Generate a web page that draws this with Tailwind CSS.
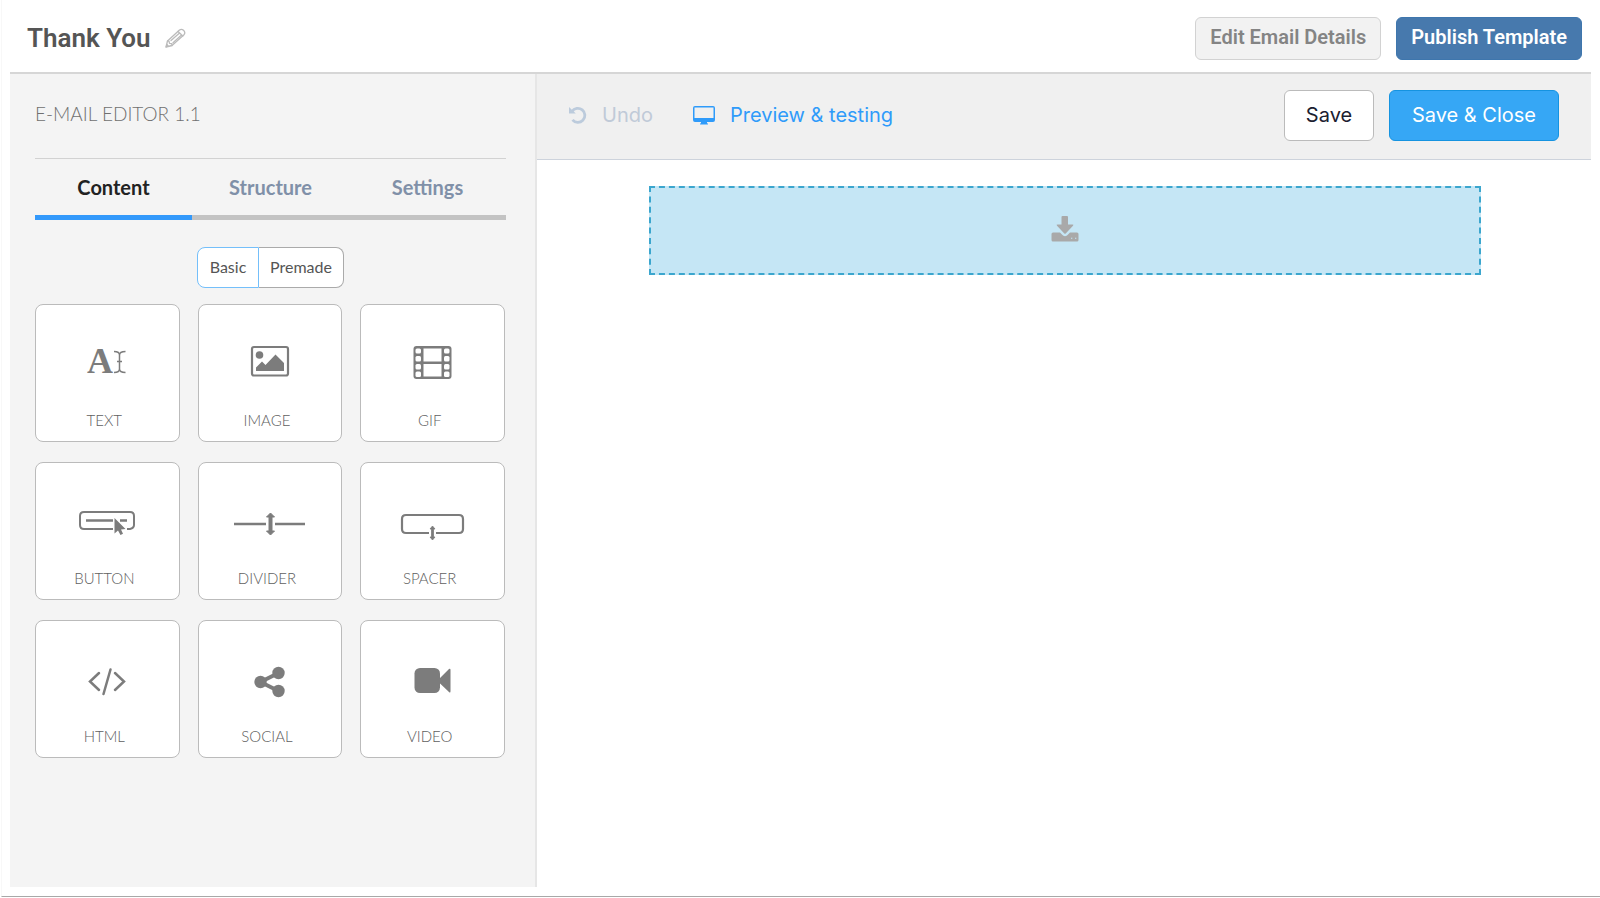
<!doctype html>
<html lang="en">

<head>
    <meta charset="UTF-8">
    <meta name="viewport" content="width=device-width, initial-scale=1.0">
    <title>Thank You - E-mail Editor</title>
    <script src="https://cdn.jsdelivr.net/npm/@tailwindcss/browser@4"></script>
</head>

<body class="min-h-screen bg-white flex flex-col font-['Lato',sans-serif]">
    <div class="grow flex flex-col mb-px ml-px pl-2 pr-[9px] pb-[9px] border-l border-l-[#f8f8f8] border-b border-b-[#a8a8a8]">
        <header class="h-[74px] pt-1 border-b-2 border-[#d6d6d6] flex items-center justify-between pl-[17px] pr-[9px] font-['Roboto',sans-serif]">
            <div class="flex items-center gap-[14px]">
                <h1 class="text-[26px] font-semibold text-[#555] leading-8">Thank You</h1>
                <button aria-label="Rename">
                    <svg class="w-[21px] h-5" viewBox="0 0 21 20" fill="none" stroke="#bbb" stroke-width="1.3" stroke-linejoin="round" stroke-linecap="round">
                        <path d="M1 19 L2.5 13 L14.5 2 Q16.5 .5 18.5 2.3 Q20.8 4.500 19 6.700 L7 17.500 Z" />
                        <path d="M2.500 13 L4 13.200 L4.500 15.300 L6.700 15.700 L7 17.500 M13 3.500 L17.800 8 M6 12.500 L14 5.500 M8 14.700 L16 7.500 M1.200 18.800 L2 16.500 L3.500 18.300" />
                    </svg>
                </button>
            </div>
            <div class="flex gap-[15px] text-xl font-semibold leading-6">
                <button class="h-[43px] px-[14px] pb-[3px] rounded-md border border-[#d2d2d2] bg-[#f2f2f2] text-[#848484]">Edit Email Details</button>
                <button class="h-[43px] px-[14px] pb-[3px] rounded-md border border-[#3e76ad] bg-[#4779ad] text-white">Publish Template</button>
            </div>
        </header>

        <div class="grow flex">
            <aside class="w-[527px] shrink-0 bg-[#f4f4f4] border-r-2 border-[#e6e6e6] pl-[25px] pr-[29px]">
                <h2 class="h-[85px] pt-7 border-b border-[#d2d2d2] text-[19px] leading-6 font-light text-[#707070]">E-MAIL EDITOR 1.1</h2>
                <div role="tablist" class="grid grid-cols-3 text-xl font-bold text-[#8090a8]">
                    <button role="tab" aria-selected="true" class="h-[61px] border-b-[5px] border-[#3399fb] text-[#222]">Content</button>
                    <button role="tab" class="h-[61px] border-b-[5px] border-[#c3c3c3]">Structure</button>
                    <button role="tab" class="h-[61px] border-b-[5px] border-[#c3c3c3]">Settings</button>
                </div>

                <div class="flex justify-center mt-[27px] h-[41px] text-base text-[#555]">
                    <button class="w-[62px] pb-[2px] bg-white border border-[#74bffa] rounded-l-lg">Basic</button>
                    <button class="w-[85px] pb-[2px] bg-white border border-l-0 border-[#aaa] rounded-r-lg">Premade</button>
                </div>

                <!-- content blocks -->
                <div class="grid grid-cols-3 gap-x-[18px] gap-y-5 mt-4 pr-px text-[15px] leading-5 font-light text-[#606060]">
                    <button class="h-[138px] bg-white border border-[#bbb] rounded-lg flex flex-col items-center pt-[35px]">
                        <svg class="w-20 h-12" viewBox="0 0 80 48" fill="none" stroke="#7c7c7c" stroke-width="1.5">
                            <text x="20" y="33" font-family="Liberation Serif, serif" font-weight="700" font-size="36" fill="#7c7c7c" stroke="none">A</text>
                            <path d="M47 11.500 Q52.500 11.500 52.500 15 V29 Q52.500 32.500 47 32.500 M58.500 11.500 Q52.500 11.500 52.500 15 M52.500 29 Q52.500 32.500 58.500 32.500 M50 21.500 H55" />
                        </svg>
                        <span class="mt-[22px] pr-[6px]">TEXT</span>
                    </button>
                    <button class="h-[138px] bg-white border border-[#bbb] rounded-lg flex flex-col items-center pt-[35px]">
                        <svg class="w-20 h-12" viewBox="0 0 80 48" fill="#7c7c7c">
                            <rect x="22" y="7" width="36" height="28.500" rx="2" fill="none" stroke="#7c7c7c" stroke-width="2.200" />
                            <circle cx="29.500" cy="15" r="3.800" />
                            <path d="M26 31 V27.500 L32 21.500 L35.500 25 L45.500 14.500 L54 23 V31 Z" />
                        </svg>
                        <span class="mt-[22px] pr-[6px]">IMAGE</span>
                    </button>
                    <button class="h-[138px] bg-white border border-[#bbb] rounded-lg flex flex-col items-center pt-[35px]">
                        <svg class="w-20 h-12" viewBox="0 0 80 48">
                            <rect x="20.500" y="6" width="38" height="33" rx="3" fill="#7c7c7c" />
                            <g fill="#fff">
                                <rect x="30.500" y="8.500" width="18" height="13" />
                                <rect x="30.500" y="24" width="18" height="12.500" />
                                <rect x="22.500" y="8.500" width="5.500" height="5" rx="1.500" />
                                <rect x="22.500" y="16" width="5.500" height="5.500" rx="1.500" />
                                <rect x="22.500" y="24" width="5.500" height="5.500" rx="1.500" />
                                <rect x="22.500" y="31.500" width="5.500" height="5.500" rx="1.500" />
                                <rect x="51" y="8.500" width="5.500" height="5" rx="1.500" />
                                <rect x="51" y="16" width="5.500" height="5.500" rx="1.500" />
                                <rect x="51" y="24" width="5.500" height="5.500" rx="1.500" />
                                <rect x="51" y="31.500" width="5.500" height="5.500" rx="1.500" />
                            </g>
                        </svg>
                        <span class="mt-[22px] pr-[6px]">GIF</span>
                    </button>
                    <button class="h-[138px] bg-white border border-[#bbb] rounded-lg flex flex-col items-center pt-[35px]">
                        <svg class="w-20 h-12" viewBox="0 0 80 48" fill="none" stroke="#7c7c7c" stroke-width="2">
                            <path d="M46 31 H17 Q13 31 13 27 V18 Q13 14 17 14 H63 Q67 14 67 18 V27 Q67 30 63 31 H60" />
                            <path d="M19 22.500 H46 M53 22.500 H60" stroke-width="2.400" />
                            <path d="M47.500 20 V35.500 L51 32.500 L53.500 37 L56 35.800 L54 31.500 L58.500 31 Z" fill="#7c7c7c" stroke="none" />
                        </svg>
                        <span class="mt-[22px] pr-[6px]">BUTTON</span>
                    </button>
                    <button class="h-[138px] bg-white border border-[#bbb] rounded-lg flex flex-col items-center pt-[35px]">
                        <svg class="w-20 h-12" viewBox="0 0 80 48" fill="none" stroke="#7c7c7c" stroke-width="2.400">
                            <path d="M4 26 H36 M45 26 H75" />
                            <path d="M40.500 15 L44.500 19 H42 V33 H44.500 L40.500 37 L36.500 33 H39 V19 H36.500 Z" fill="#7c7c7c" stroke-width="1" stroke-linejoin="round" />
                        </svg>
                        <span class="mt-[22px] pr-[6px]">DIVIDER</span>
                    </button>
                    <button class="h-[138px] bg-white border border-[#bbb] rounded-lg flex flex-col items-center pt-[35px]">
                        <svg class="w-20 h-12" viewBox="0 0 80 48" fill="none" stroke="#7c7c7c" stroke-width="2.200">
                            <path d="M36 35 H13 Q9 35 9 31 V21 Q9 17 13 17 H66 Q70 17 70 21 V31 Q70 35 66 35 H43" />
                            <path d="M39.500 28 L42 31 H40.500 V39 H42 L39.500 42 L37 39 H38.500 V31 H37 Z" fill="#7c7c7c" stroke-width="0.800" stroke-linejoin="round" />
                        </svg>
                        <span class="mt-[22px] pr-[6px]">SPACER</span>
                    </button>
                    <button class="h-[138px] bg-white border border-[#bbb] rounded-lg flex flex-col items-center pt-[35px]">
                        <svg class="w-20 h-12" viewBox="0 0 80 48" fill="none" stroke="#7c7c7c" stroke-width="2.500" stroke-linecap="round">
                            <path d="M32 17 L23 25.500 L32 34 M48 17 L57 25.500 L48 34 M43.500 13.500 L36.500 38" />
                        </svg>
                        <span class="mt-[22px] pr-[6px]">HTML</span>
                    </button>
                    <button class="h-[138px] bg-white border border-[#bbb] rounded-lg flex flex-col items-center pt-[35px]">
                        <svg class="w-20 h-12" viewBox="0 0 80 48" fill="#7c7c7c">
                            <circle cx="30.500" cy="26" r="6.200" />
                            <circle cx="48.500" cy="17" r="6.200" />
                            <circle cx="48.500" cy="35" r="6.200" />
                            <path d="M48.500 17 L30.500 26 L48.500 35" fill="none" stroke="#7c7c7c" stroke-width="4" />
                        </svg>
                        <span class="mt-[22px] pr-[6px]">SOCIAL</span>
                    </button>
                    <button class="h-[138px] bg-white border border-[#bbb] rounded-lg flex flex-col items-center pt-[35px]">
                        <svg class="w-20 h-12" viewBox="0 0 80 48" fill="#7c7c7c">
                            <rect x="21.500" y="12" width="25.500" height="25" rx="5.500" />
                            <path d="M46 23 L56 13 Q57.500 12 57.500 14 V35 Q57.500 37.500 56 36 L46 26.500 Z" />
                        </svg>
                        <span class="mt-[22px] pr-[6px]">VIDEO</span>
                    </button>
                </div>
            </aside>

            <main class="grow">
                <div class="h-[86px] bg-[#f0f0f0] border-b border-[#cdd3dc] flex items-center justify-between pl-[32px] pr-8 pb-[3px] font-['Inter',sans-serif] text-xl">
                    <div class="flex items-center gap-10">
                        <button class="flex items-center gap-[15px] text-[#c0cad8]" disabled>
                            <svg class="w-[18px] h-[18px]" viewBox="0 0 18 18" fill="none" stroke="#bccbdc" stroke-width="2.800">
                                <path d="M3 5.500 A7 7 0 1 1 3.500 13.800" />
                                <path d="M0 1 V7.500 H6.800 Z" fill="#bccbdc" stroke="none" />
                            </svg>
                            Undo
                        </button>
                        <button class="flex items-center gap-[15px] text-[#2f9bfa]">
                            <svg class="w-[22px] h-5" viewBox="0 0 22 20" fill="#2f9bfa">
                                <path fill-rule="evenodd" d="M2 1 H20 Q22 1 22 3 V15 Q22 17 20 17 H14 V18 Q15 18.300 15 19.500 H7 Q7 18.300 8 18 V17 H2 Q0 17 0 15 V3 Q0 1 2 1 Z M1.500 2.500 V13 H20.500 V2.500 Z" />
                            </svg>
                            Preview &amp; testing
                        </button>
                    </div>
                    <div class="flex gap-[15px]">
                        <button class="h-[51px] w-[90px] pb-px rounded-md border border-[#bbb] bg-white text-[#1a2030]">Save</button>
                        <button class="h-[51px] w-[170px] pb-px rounded-md border border-[#1593e0] bg-[#36a7f5] text-white">Save &amp; Close</button>
                    </div>
                </div>

                <div class="pt-[26px] pl-[2px]">
                    <div class="max-w-[832px] h-[89px] mx-auto pb-[3px] border-2 border-dashed border-[#3ba6ce] bg-[#c5e6f5] flex items-center justify-center">
                        <svg class="w-7 h-[26px]" viewBox="0 0 28 26" fill="#a9a9a9">
                            <path d="M11.500 0 H16 Q17 0 17 1 V8.500 H21.500 Q23 8.500 22 9.800 L14.700 17.400 Q14 18 13.300 17.400 L6 9.800 Q5 8.500 6.500 8.500 H10.500 V1 Q10.500 0 11.500 0 Z" />
                            <path fill-rule="evenodd" d="M2 16.500 H9 L12 19.500 Q14 21 16 19.500 L19 16.500 H26 Q27.500 16.500 27.500 18 V24 Q27.500 25.500 26 25.500 H2 Q.5 25.500 .5 24 V18 Q.5 16.500 2 16.500 Z M20 21.700 V22.700 H21.300 V21.700 Z M24 21.700 V22.700 H25.300 V21.700 Z" />
                        </svg>
                    </div>
                </div>
            </main>
        </div>
    </div>
</body>

</html>
